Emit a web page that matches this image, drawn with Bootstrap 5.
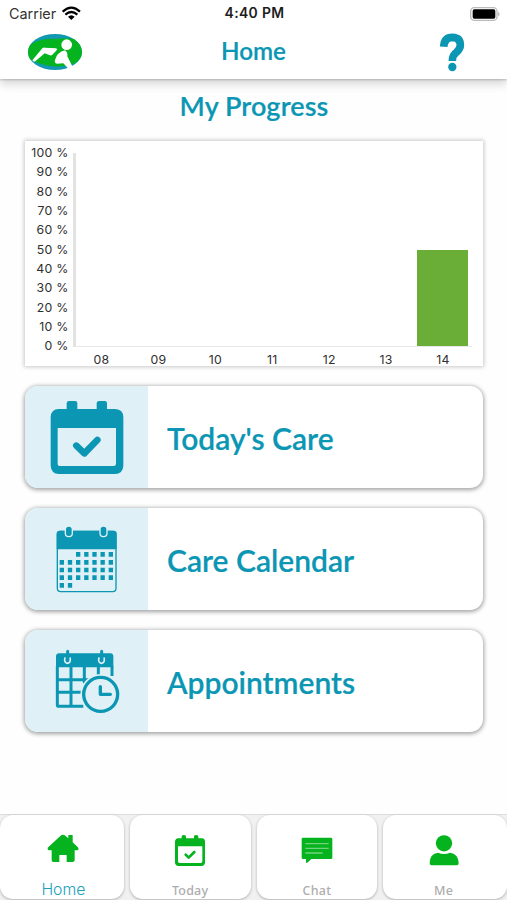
<!DOCTYPE html>
<html lang="en">
<head>
<meta charset="utf-8">
<meta name="viewport" content="width=device-width, initial-scale=1">
<title>Home</title>
<link href="https://cdn.jsdelivr.net/npm/bootstrap@5.3.0/dist/css/bootstrap.min.css" rel="stylesheet">
<style>
:root{--teal:#0b96b4;--leaf:#04b31e}
body{font-family:Lato,sans-serif;background:#fefefe;height:900px;overflow:hidden}
svg{display:block;flex:none}
.top-area{height:79px;box-shadow:0 1px 2px rgba(0,0,0,.2),0 5px 9px rgba(0,0,0,.16);z-index:2}
.status-row{height:27px;font:14.4px/27px Inter,sans-serif;color:#333;padding:0 7px 0 9px}
.status-row .wifi{margin-left:6px}
.status-time{font-weight:600;font-size:13.9px;color:#1c1c1c;letter-spacing:.35px}
.side{flex:1 1 0}
.title-row{height:52px;padding:0 42px 0 27px}
.title-row .side:last-child{margin-left:-15px}
.screen-title{font-size:24.2px;line-height:44px;font-weight:600;padding-bottom:4px;-webkit-text-stroke:.2px}
.teal{color:var(--teal)}
.section-title{font-size:27px;line-height:32px;font-weight:600;padding-top:11px;height:62px;letter-spacing:.1px;-webkit-text-stroke:.2px}
.page-col{padding:0 24px 0 25px}
.chart-box{height:225px;box-shadow:0 0 4px 1px rgba(0,0,0,.22);font:12.3px/19.34px Inter,sans-serif;color:#303030;letter-spacing:.25px}
.y-labels{width:43.5px;padding-top:2px;height:216px}
.plot-col{margin-left:4.5px;margin-right:11.5px;padding-top:12px}
.plot{height:194px;border-left:3px solid #e2e2e2;border-bottom:1px solid #e8e8e8}
.bar{width:51px;background:#6aae37}
.x-labels{height:19px;line-height:25px}
.menu-card{height:102px;border-radius:13px;margin-top:20px;box-shadow:0 1px 4px 1px rgba(0,0,0,.36);font-size:30px;font-weight:600;color:var(--teal);background:#fff}
.menu-card svg{background:#dff1f6}
.menu-card .caption{padding:2px 0 0 19px;line-height:40px;-webkit-text-stroke:.2px}
.tab-strip{height:86px;background:#f1f1f1;border-top:1px solid #ddd;gap:6px}
.tab-item{flex:1 1 0;height:84px;background:#fff;border-radius:13px;box-shadow:0 1px 3px rgba(0,0,0,.28);font:500 12.5px/18px "Noto Sans",sans-serif;color:#adadad;letter-spacing:.2px}
.tab-item:first-child,.tab-item:last-child{flex-basis:3px}
.tab-item:last-child{padding-right:3px}
.tab-item svg{margin-top:13px;height:44px;width:44px;fill:var(--leaf)}
.tab-label{margin-top:10px}
.tab-item.current .tab-label{font:300 15.8px/18px Inter,sans-serif;color:#1ba0bd;margin-top:9px;letter-spacing:0}
.tab-item.current{padding-left:3px}
</style>
<script src="https://cdn.jsdelivr.net/npm/bootstrap@5.3.0/dist/js/bootstrap.bundle.min.js"></script>
</head>
<body class="d-flex flex-column">
<header class="top-area bg-white position-relative flex-shrink-0">
  <div class="status-row d-flex align-items-center">
    <div class="side d-flex align-items-center">Carrier
      <svg class="wifi" width="19" height="15" viewBox="0 0 57 45" fill="none" stroke="#000" stroke-width="6.5"><path d="M2 17Q28-7 54 17M10 26Q28 10 46 26"/><path d="M18 32Q28 23 38 32L28 42Z" fill="#000" stroke="none"/></svg>
    </div>
    <div class="status-time">4:40 PM</div>
    <div class="side d-flex justify-content-end"><svg width="30" height="14" viewBox="0 0 90 42"><rect x="2" y="2" width="79" height="38" rx="11" fill="#fff" stroke="#bbb" stroke-width="4"/><rect x="8" y="7" width="68" height="28" rx="5"/><path d="M84 14Q94 21 84 28Z" fill="#bbb"/></svg></div>
  </div>
  <div class="title-row d-flex align-items-center">
    <div class="side"><svg width="57" height="40" viewBox="81 99 171 120">
      <clipPath id="oval"><ellipse cx="165" cy="156" rx="81" ry="54"/></clipPath>
      <ellipse cx="165" cy="156" rx="81" ry="54" fill="#1298b3"/>
      <g clip-path="url(#oval)"><path d="M80 143Q112 113 165 117Q215 111 235 121L252 160Q241 181 222 191Q190 203 153 198Q112 193 80 172Z" fill="#04b31e"/></g>
      <g fill="#fff"><circle cx="200" cy="134" r="16"/><path d="M97 181L127 145Q130 142 134 143L168 145Q174 147 168 153L157 164Q153 168 148 165L134 160L106 184Q101 187 97 181Z"/><path d="M195 151Q204 157 202 169L217 199L207 208L190 190L171 191Q162 189 165 180Q171 157 195 151Z"/></g>
    </svg></div>
    <div class="screen-title teal">Home</div>
    <div class="side d-flex justify-content-end"><svg width="26" height="40" viewBox="0 3 78 120" fill="none" stroke="#0b96b4"><path d="M14 44Q16 16 40 16Q64 17 64 39Q64 51 52 61Q40 69 40 87" stroke-width="23"/><circle cx="40" cy="105" r="12.500" fill="#0b96b4" stroke="none"/></svg></div>
  </div>
</header>

<main class="flex-grow-1 page-col">
  <h1 class="section-title teal text-center mb-0">My Progress</h1>
  <section class="chart-box bg-white d-flex">
    <div class="y-labels text-end">
      <div>100 %</div><div>90 %</div><div>80 %</div><div>70 %</div><div>60 %</div><div>50 %</div><div>40 %</div><div>30 %</div><div>20 %</div><div>10 %</div><div>0 %</div>
    </div>
    <div class="plot-col flex-grow-1">
      <div class="plot d-flex align-items-end justify-content-end"><div class="bar me-1" style="height:50%"></div></div>
      <div class="x-labels row row-cols-7 gx-0 text-center">
        <div class="col">08</div><div class="col">09</div><div class="col">10</div><div class="col">11</div><div class="col">12</div><div class="col">13</div><div class="col">14</div>
      </div>
    </div>
  </section>

  <a class="menu-card d-flex align-items-center overflow-hidden text-decoration-none">
    <svg width="123" height="102" viewBox="30 33 369 306" fill="#0b96b4"><path fill-rule="evenodd" d="M131 102H155V84Q156 78 162 78H180Q187 78 187 84V102H245V84Q246 78 252 78H269Q276 78 276 84V102H301Q325 103 325 127V272Q324 296 300 297H132Q108 296 107 272V126Q108 103 131 102ZM128 159V266Q128 273 136 273H296Q303 273 303 266V159Z"/><path d="M184 212L208 235L247 195" fill="none" stroke="#0b96b4" stroke-width="20" stroke-linecap="round" stroke-linejoin="round"/></svg>
    <span class="caption">Today's Care</span>
  </a>
  <a class="menu-card d-flex align-items-center overflow-hidden text-decoration-none">
    <svg width="123" height="102" viewBox="30 24 369 306"><rect x="127" y="94" width="176" height="181" rx="10" fill="none" stroke="#0b96b4" stroke-width="4"/><path d="M125 148V99Q126 92 133 92H297Q304 92 305 99V148Z" fill="#0b96b4"/>
      <g fill="#0b96b4" stroke="#dff1f6" stroke-width="4"><rect x="151" y="78" width="21" height="32" rx="10"/><rect x="255" y="78" width="21" height="32" rx="10"/></g>
      <path d="M183 163H297M134 187H297M134 210H297M134 233H297M134 256H175" stroke="#0b96b4" stroke-width="14" stroke-dasharray="13 11.500"/>
    </svg>
    <span class="caption">Care Calendar</span>
  </a>
  <a class="menu-card d-flex align-items-center overflow-hidden text-decoration-none">
    <svg width="123" height="102" viewBox="30 30 369 306" fill="none" stroke="#0b96b4"><path d="M123 142V108Q124 100 132 100H287Q295 101 295 109V142Z" fill="#0b96b4" stroke="none"/><path d="M127 138V254Q127 259 132 259H205M291 138V168M127 179H230M127 217H205M168 138V259M208 138V190M250 138V165" stroke-width="9"/>
      <path d="M150 112Q146 128 157 130Q169 129 165 112M252 112Q248 128 259 130Q271 129 267 112" stroke="#dff1f6" stroke-width="5"/><path d="M158 94V115M260 94V115" stroke-width="9" stroke-linecap="round"/>
      <circle cx="257" cy="223" r="61" fill="#dff1f6" stroke="none"/><circle cx="257" cy="223" r="51" stroke-width="10"/><path d="M256 200V223H286" stroke-width="10" stroke-linecap="round" stroke-linejoin="round"/></svg>
    <span class="caption">Appointments</span>
  </a>
</main>

<nav class="tab-strip d-flex flex-shrink-0">
  <a class="tab-item current d-flex flex-column align-items-center text-decoration-none">
    <svg viewBox="126 84 132 132"><path d="M146 143L184 108Q192 101 200 108L208 115V105H221V127L238 143Q240 149 236 151H227V181Q226 186 221 186H203V165H181V186H163Q158 186 158 181V151H149Q145 149 146 143Z"/></svg>
    <span class="tab-label">Home</span>
  </a>
  <a class="tab-item d-flex flex-column align-items-center text-decoration-none">
    <svg viewBox="507 84 132 132"><path fill-rule="evenodd" d="M537 115H548V109Q549 105 555 105Q561 105 561 110V115H585V109Q586 105 592 105Q598 105 598 110V115H609Q618 116 618 125V188Q617 197 608 198H538Q529 197 528 188V125Q529 116 537 115ZM537 139V184Q537 189 542 189H605Q610 189 610 184V139Z"/><path d="M560 164L569 173L586 156" fill="none" stroke="#04b31e" stroke-width="8" stroke-linecap="round" stroke-linejoin="round"/></svg>
    <span class="tab-label">Today</span>
  </a>
  <a class="tab-item d-flex flex-column align-items-center text-decoration-none">
    <svg viewBox="124 84 132 132"><path d="M148 113H232Q236 113 236 117V173Q236 177 232 177H173L160 189Q157 189 157 186V177H148Q144 177 144 173V117Q144 113 148 113Z"/><path d="M155 131H225M155 145H225M155 159H207" stroke="#72d37c" stroke-width="4"/></svg>
    <span class="tab-label">Chat</span>
  </a>
  <a class="tab-item d-flex flex-column align-items-center text-decoration-none">
    <svg viewBox="504 84 132 132"><circle cx="570" cy="130" r="24.500"/><path d="M527 188Q528 161 552 158Q570 166 588 158Q612 161 614 188Q614 196 606 196H535Q527 196 527 188Z"/></svg>
    <span class="tab-label">Me</span>
  </a>
</nav>
</body>
</html>
